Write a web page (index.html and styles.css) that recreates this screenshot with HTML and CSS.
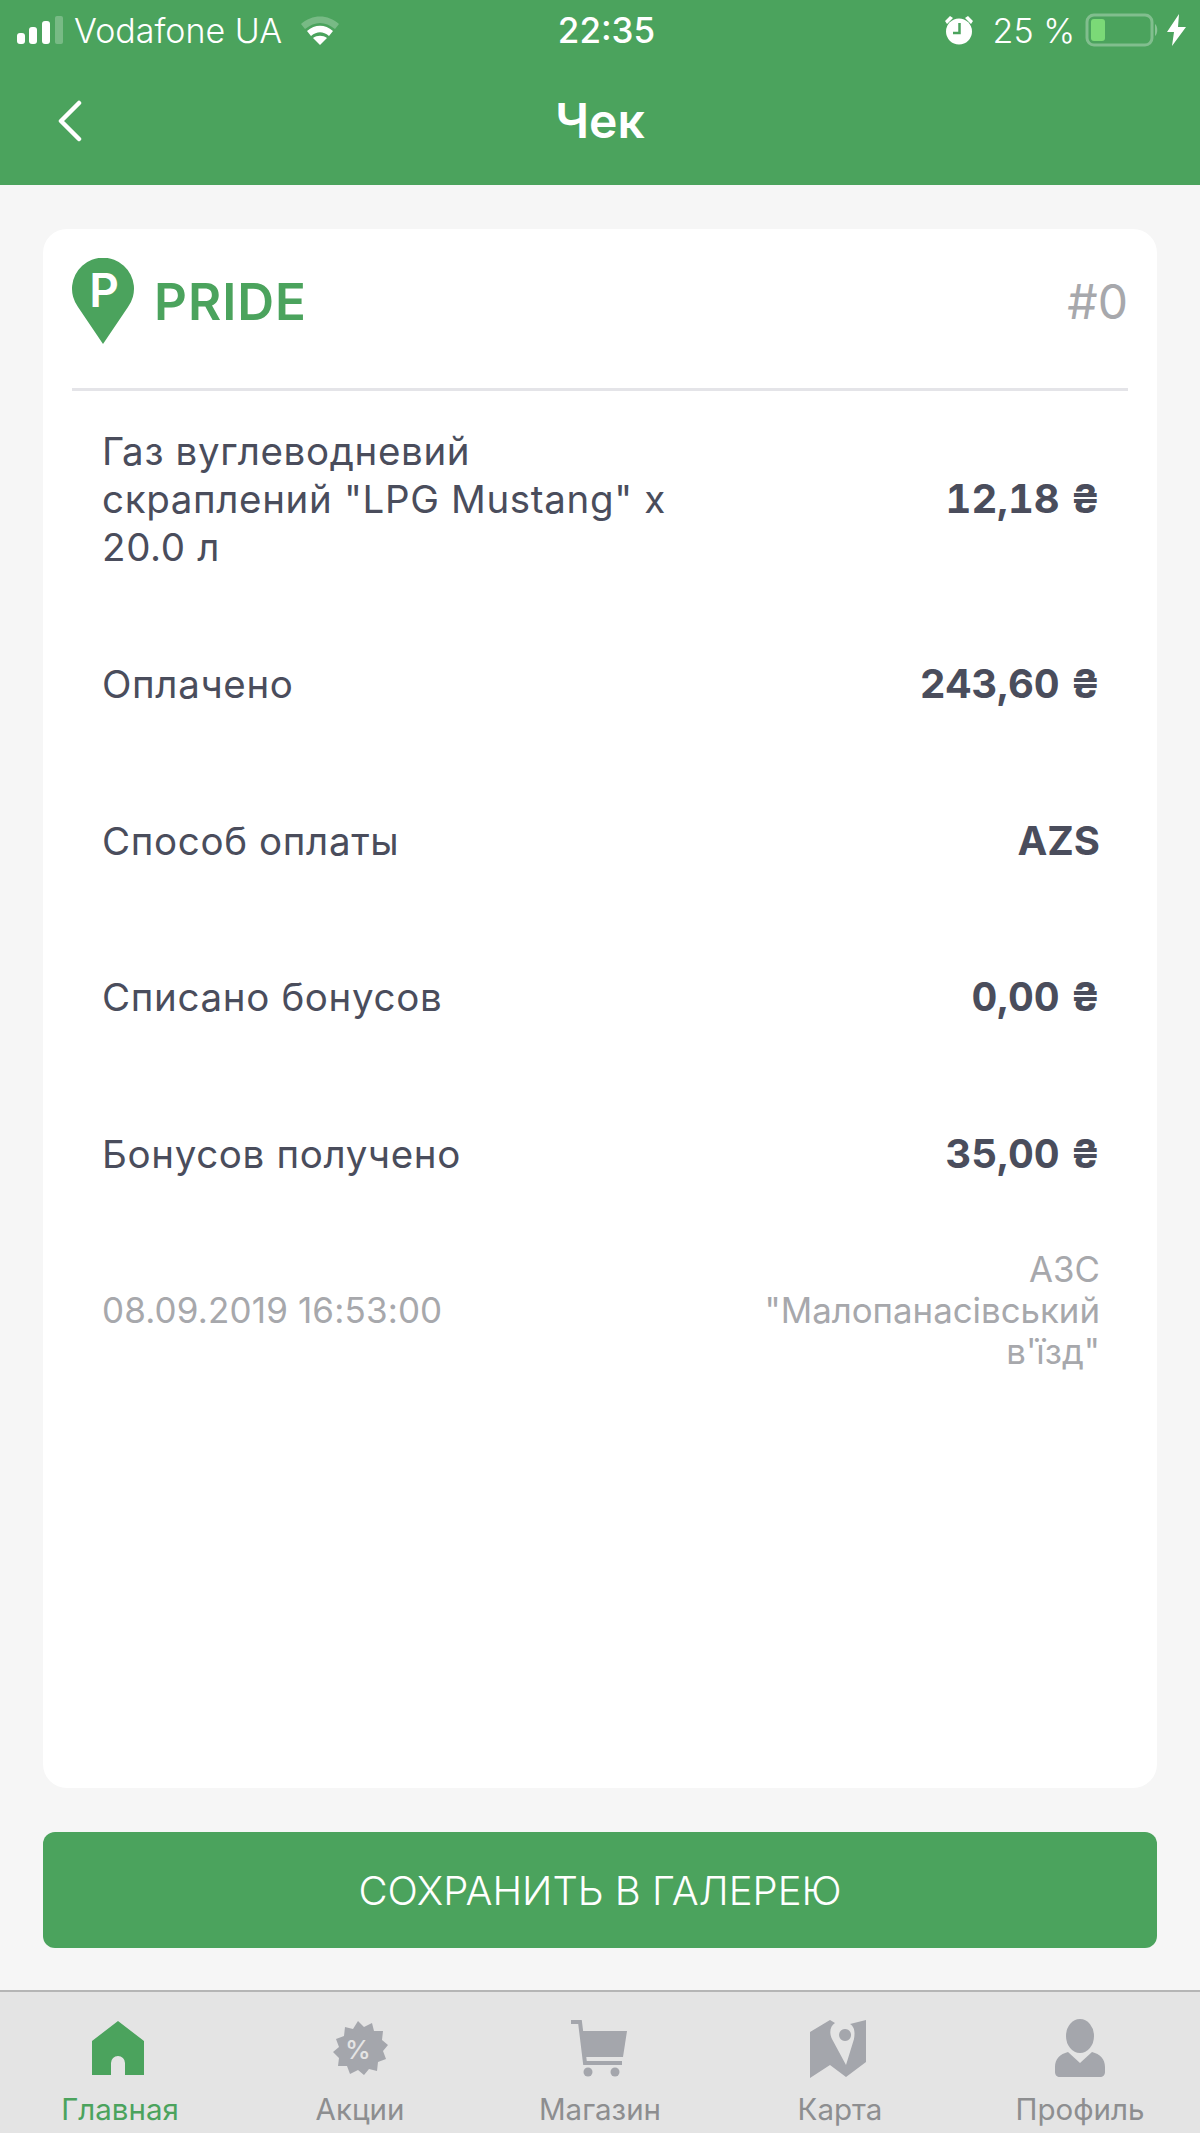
FILE: index.html
```html
<!DOCTYPE html>
<html lang="ru">
<head>
<meta charset="utf-8">
<title>Чек</title>
<link rel="stylesheet" href="styles.css">
</head>
<body>
<div class="app">
  <header class="header">
    <div class="status">
      <div class="status-left">
        <svg class="signal" viewBox="0 0 46 28"><rect x="0" y="17" width="8" height="11" rx="3" fill="#fff"/><rect x="12" y="11" width="8" height="17" rx="3" fill="#fff"/><rect x="25" y="5" width="8" height="23" rx="3" fill="#fff"/><rect x="38" y="0" width="8" height="28" rx="2" fill="#fff" opacity=".25"/></svg>
        <span class="carrier">Vodafone UA</span>
        <svg class="wifi" viewBox="0 0 40 30"><path d="M1 9C12-1 28-1 39 9l-4 5C25 6 15 6 5 14z" fill="#fff" opacity=".25"/><path d="M7 16c8-7 18-7 26 0l-4 5c-6-5-12-5-18 0z" fill="#fff"/><path d="M13 23c4-3 10-3 14 0l-7 7z" fill="#fff"/></svg>
      </div>
      <span class="time">22:35</span>
      <div class="status-right">
        <svg class="alarm" viewBox="0 0 30 30"><circle cx="15" cy="16.500" r="13" fill="#fff"/><path d="M1 6l5-5 3 2-6 6zM29 6l-5-5-3 2 6 6z" fill="#fff"/><path d="M15.500 8v10H9" fill="none" stroke="#4ba35d" stroke-width="2.500"/></svg>
        <span class="percent">25 %</span>
        <svg class="battery" viewBox="0 0 73 34"><rect x="2" y="2" width="65" height="30" rx="7" fill="none" stroke="#fff" stroke-opacity=".3" stroke-width="3"/><rect x="6" y="6" width="14" height="22" rx="3" fill="#7bd977"/><path d="M70 11c3 2 3 10 0 12z" fill="#fff" opacity=".35"/></svg>
        <svg class="bolt" viewBox="0 0 19 32"><path d="M12 0L0 18h7L5 32 19 13h-8z" fill="#fff"/></svg>
      </div>
    </div>
    <div class="nav">
      <svg class="back" viewBox="0 0 24 42"><path d="M21 3L3 21l18 18" fill="none" stroke="#fff" stroke-width="4.500" stroke-linecap="round" stroke-linejoin="round"/></svg>
      <h1 class="title">Чек</h1>
    </div>
  </header>

  <main class="content">
    <section class="card">
      <div class="card-head">
        <div class="logo">
          <svg class="pin" viewBox="0 0 62 86"><path d="M31 86L6 49A31 31 0 1 1 56 49z" fill="#4ba35d"/><text x="32" y="49" text-anchor="middle" class="pin-letter">P</text></svg>
          <span class="brand">PRIDE</span>
        </div>
        <span class="number">#0</span>
      </div>
      <div class="rows">
        <div class="row row-multi"><span class="label label-wrap">Газ вуглеводневий скраплений "LPG Mustang" x 20.0 л</span><strong class="value">12,18 ₴</strong></div>
        <div class="row"><span class="label">Оплачено</span><strong class="value">243,60 ₴</strong></div>
        <div class="row"><span class="label">Способ оплаты</span><strong class="value">AZS</strong></div>
        <div class="row"><span class="label">Списано бонусов</span><strong class="value">0,00 ₴</strong></div>
        <div class="row"><span class="label">Бонусов получено</span><strong class="value">35,00 ₴</strong></div>
        <div class="row meta"><span class="date">08.09.2019 16:53:00</span><span class="station">АЗС "Малопанасівський в'їзд"</span></div>
      </div>
    </section>
    <button class="save">СОХРАНИТЬ В ГАЛЕРЕЮ</button>
  </main>

  <nav class="tabs">
    <div class="tab active">
      <svg class="tab-icon" viewBox="0 0 60 60"><path d="M30 2L56 22V56H37V44a7 7 0 0 0-14 0V56H4V22z" fill="#4ba35d"/></svg>
      <span>Главная</span>
    </div>
    <div class="tab">
      <svg class="tab-icon" viewBox="0 0 60 60"><path d="M30 2l6 6 8-4 2 8 9 0-1 9 6 5-5 6 3 8-8 3-1 9-8-2-5 6-6-5-8 4-3-8-9 0 1-8-6-6 6-5-3-8 8-3 1-9 8 2z" fill="#a4a6ac"/><text x="30" y="40" text-anchor="middle" class="pct">%</text></svg>
      <span>Акции</span>
    </div>
    <div class="tab">
      <svg class="tab-icon" viewBox="0 0 60 60"><path d="M3 3h9l5 41h37" fill="none" stroke="#a4a6ac" stroke-width="4"/><path d="M14 12h45l-4 26H17z" fill="#a4a6ac"/><circle cx="20" cy="53" r="4.500" fill="#a4a6ac"/><circle cx="47" cy="53" r="4.500" fill="#a4a6ac"/></svg>
      <span>Магазин</span>
    </div>
    <div class="tab">
      <svg class="tab-icon" viewBox="0 0 60 60"><path fill-rule="evenodd" d="M2 13L22 1 27 4C22 7 21 14 24 20L38 46 46 20C47 14 47 8 42 5L58 1V43L38 58 22 46 2 59zM37 10a6 6 0 1 0 .1 0z" fill="#a4a6ac"/></svg>
      <span>Карта</span>
    </div>
    <div class="tab">
      <svg class="tab-icon tab-icon-last" viewBox="0 0 60 60"><ellipse cx="30" cy="17" rx="14" ry="17" fill="#a4a6ac"/><path d="M18 33l12 11 12-11c8 2 13 7 13 15v5c0 3-2 5-5 5H10c-3 0-5-2-5-5v-5c0-8 5-13 13-15z" fill="#a4a6ac"/></svg>
      <span>Профиль</span>
    </div>
  </nav>
</div>
</body>
</html>
```
FILE: styles.css
```css
* { box-sizing: border-box; }
html, body { margin: 0; padding: 0; }
body { font-family: Inter, "Liberation Sans", sans-serif; background: #f6f6f6; color: #4a4d5c; }
.app { width: 1200px; height: 2133px; display: flex; flex-direction: column; overflow: hidden; }

.header { height: 185px; background: #4ba35d; color: #fff; display: flex; flex-direction: column; flex: none; }
.status { height: 60px; padding: 0 14px 0 17px; display: grid; grid-template-columns: 1fr auto 1fr; align-items: center; }
.status-left, .status-right { display: flex; align-items: center; }
.status-right { justify-content: flex-end; }
.signal { width: 46px; height: 28px; }
.carrier { font-size: 34px; font-weight: 300; margin-left: 11px; }
.wifi { width: 40px; height: 30px; margin-left: 18px; }
.time { font-size: 35px; font-weight: 500; margin-left: 10px; }
.alarm { width: 30px; height: 30px; }
.percent { font-size: 34px; font-weight: 300; margin-left: 19px; }
.battery { width: 73px; height: 34px; margin-left: 10px; }
.bolt { width: 19px; height: 32px; margin-left: 9px; }

.nav { flex: 1; display: flex; align-items: center; justify-content: center; position: relative; padding-bottom: 4px; }
.back { position: absolute; left: 58px; top: 40px; width: 24px; height: 42px; }
.title { margin: 0; font-size: 48px; font-weight: 600; }

.content { flex: 1; padding: 44px 43px 42px; display: flex; flex-direction: column; gap: 44px; }
.card { flex: 1; background: #fff; border-radius: 24px; padding: 0 29px; }
.card-head { height: 162px; border-bottom: 3px solid #e4e4e8; display: flex; justify-content: space-between; align-items: center; padding-bottom: 15px; }
.logo { display: flex; align-items: center; gap: 20px; }
.pin { width: 62px; height: 86px; }
.pin-letter { font-family: Inter, sans-serif; font-size: 46px; font-weight: 600; fill: #fff; }
.brand { font-size: 51px; font-weight: 600; color: #4ba35d; letter-spacing: 1px; }
.number { font-size: 48px; color: #a7a8ac; font-weight: 400; }

.rows { padding: 1px 28px 0 30px; }
.row { min-height: 156.500px; display: flex; justify-content: space-between; align-items: center; font-size: 38.500px; line-height: 48px; letter-spacing: .65px; }
.row-multi { min-height: 214px; }
.label-wrap { width: 570px; }
.value { font-weight: 700; font-size: 40px; letter-spacing: 0; font-feature-settings: "tnum"; }
.meta { color: #a7a8ac; font-size: 35px; line-height: 41px; letter-spacing: 0; }
.date { letter-spacing: .15px; }
.station { width: 360px; text-align: right; font-size: 34.800px; }

.save { height: 116px; flex: none; border: 0; border-radius: 12px; background: #4ba35d; color: #fff; font-family: inherit; font-size: 40px; font-weight: 300; padding: 0; }

.tabs { height: 143px; flex: none; background: #e4e4e4; border-top: 2px solid #b5b5b5; display: grid; grid-template-columns: repeat(5, 240px); }
.tab { display: flex; flex-direction: column; align-items: center; padding-top: 27px; color: #8d8e90; font-size: 29.500px; gap: 12px; }
.tab.active { color: #4ba35d; }
.tab-icon { width: 60px; height: 60px; margin-right: 4px; }
.tab-icon-last { margin-right: 0; }
.pct { font-family: Inter, sans-serif; font-size: 26px; font-weight: 500; fill: #e4e4e4; }
```
